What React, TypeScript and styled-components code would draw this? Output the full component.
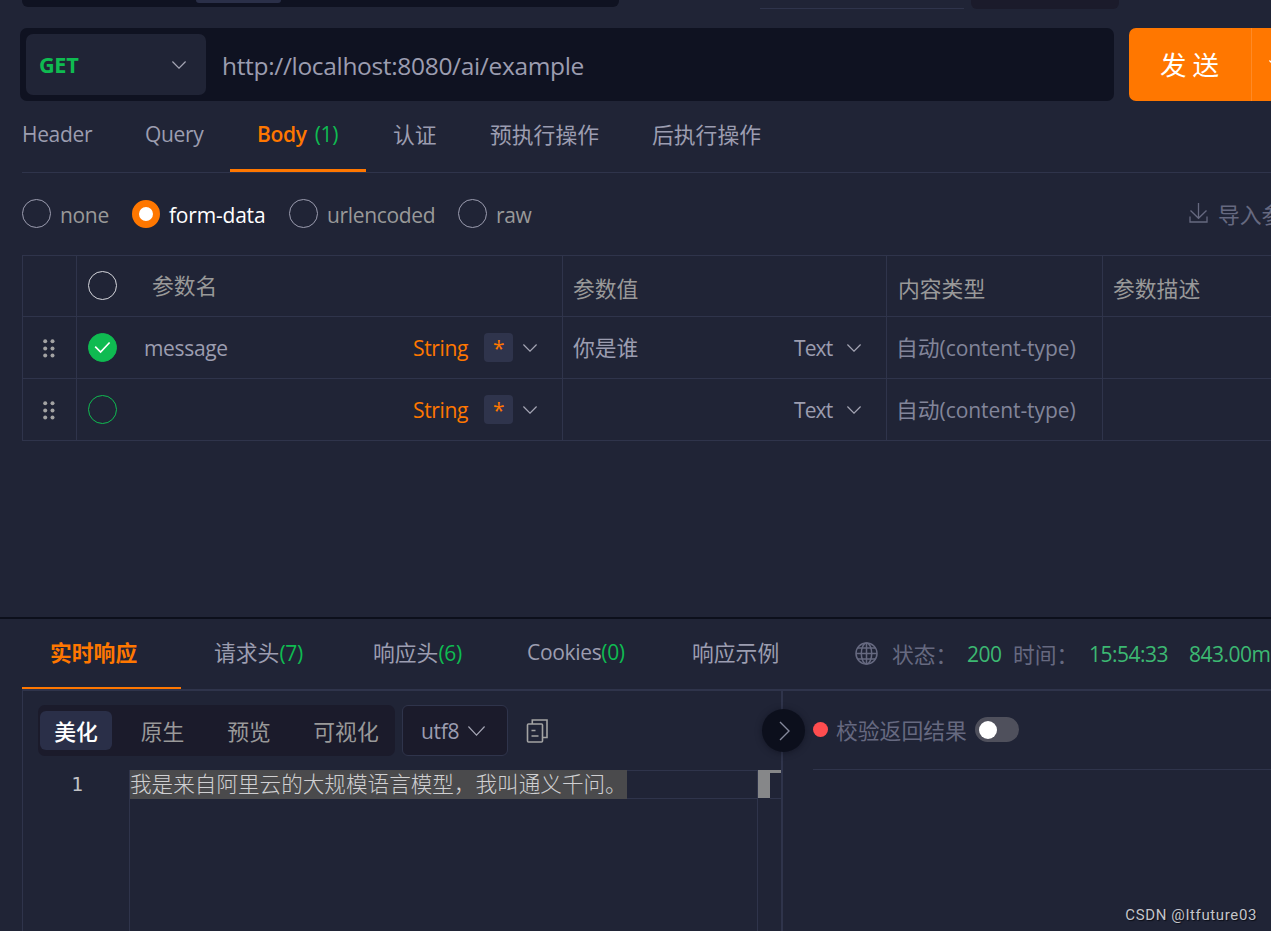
import React from "react";
import styled, { createGlobalStyle } from "styled-components";

const GlobalStyle = createGlobalStyle`
  * { box-sizing: border-box; }
  html, body { margin: 0; overflow: hidden; background: #202436; }
  body { font-family: "Open Sans", "Noto Sans CJK SC", sans-serif; }
`;

const line = "#2f344b";
const orange = "#ff7700";
const green = "#0fbb51";
const text = "#9c9db0";
const muted = "#666980";

const Page = styled.div`
  position: relative;
  width: 1271px;
  height: 931px;
  overflow: hidden;
  background: #202436;
  color: ${text};
  font-size: 21px;
  letter-spacing: -0.33px;
  line-height: 30px;
  display: flex;
  flex-direction: column;
  white-space: nowrap;
`;

const Cjk = styled.span<{ $size?: number }>`
  font-family: "Noto Sans CJK SC", sans-serif;
  font-size: ${(p) => p.$size ?? 21.8}px;
  letter-spacing: 0;
`;

const TopStrip = styled.div`
  display: flex;
  align-items: flex-start;
  height: 28px;
  flex: none;
  padding-left: 22px;
`;
const TopBar = styled.div`
  width: 597px;
  height: 7px;
  padding-left: 174px;
  background: #0f1221;
  border-radius: 0 0 6px 6px;
`;
const TopBarActive = styled.div`
  width: 85px;
  height: 3px;
  background: #2a2f48;
  border-radius: 0 0 4px 4px;
`;
const TopField = styled.div`
  width: 204px;
  height: 9px;
  margin-left: 141px;
  border-bottom: 1px solid ${line};
`;
const TopButton = styled.div`
  width: 148px;
  height: 9px;
  margin-left: 7px;
  background: #1b1b2b;
  border-radius: 0 0 6px 6px;
`;

const UrlRow = styled.div`
  display: flex;
  flex: none;
  height: 73px;
  padding-left: 20px;
`;
const UrlBox = styled.div`
  display: flex;
  align-items: center;
  flex: none;
  width: 1094px;
  padding: 0 6px;
  background: #0f1221;
  border-radius: 7px;
`;
const UrlText = styled.span`
  padding-top: 2px;
  font-size: 24.5px;
`;
const MethodSelect = styled.div`
  display: flex;
  align-items: center;
  justify-content: space-between;
  width: 180px;
  height: 61px;
  margin-right: 16px;
  padding: 0 20px 0 13px;
  border-radius: 7px;
  background: #202436;
  color: ${green};
  font-size: 21.7px;
  font-weight: 700;
`;
const SendButton = styled.div`
  display: flex;
  align-items: center;
  flex: none;
  width: 160px;
  margin-left: 15px;
  background: ${orange};
  border-radius: 7px;
  color: #fff;
`;
const SendLabel = styled.div`
  display: flex;
  align-items: center;
  width: 123px;
  height: 100%;
  padding: 0 0 1px 31px;
  border-right: 1px solid #ff8a26;
`;
const SendMore = styled.div`
  padding-left: 17px;
  display: flex;
`;

const Tabs = styled.div`
  display: flex;
  flex: none;
  height: 72px;
  margin-left: 22px;
  border-bottom: 1px solid ${line};
`;
const Tab = styled.div<{ $width: number; $first?: boolean; $active?: boolean }>`
  flex: none;
  width: ${(p) => p.$width}px;
  height: 71px;
  padding: 18px 0 0 ${(p) => (p.$first ? 0 : 27)}px;
  border-bottom: ${(p) => (p.$active ? `3px solid ${orange}` : "none")};
  color: ${(p) => (p.$active ? orange : text)};
  font-weight: ${(p) => (p.$active ? 600 : 400)};
`;
const Count = styled.span<{ $gap?: number }>`
  margin-left: ${(p) => p.$gap ?? 0}px;
  color: ${green};
  font-weight: 400;
`;

const BodyTypes = styled.div`
  display: flex;
  align-items: center;
  flex: none;
  height: 82px;
  padding-left: 22px;
`;
const RadioOption = styled.div<{ $width: number; $active?: boolean }>`
  display: flex;
  align-items: center;
  flex: none;
  gap: 9px;
  width: ${(p) => p.$width}px;
  margin-top: -1px;
  color: ${(p) => (p.$active ? "#fff" : "#999")};
  font-weight: ${(p) => (p.$active ? 500 : 400)};
  letter-spacing: ${(p) => (p.$active ? -0.2 : -0.33)}px;
  span { padding-top: 2px; }
`;
const Circle = styled.i<{ $color: string; $fill?: string }>`
  display: flex;
  align-items: center;
  justify-content: center;
  flex: none;
  width: 29px;
  height: 29px;
  border: 1px solid ${(p) => p.$color};
  border-radius: 50%;
  background: ${(p) => p.$fill ?? "transparent"};
`;
const RadioOn = styled.i`
  flex: none;
  width: 28px;
  height: 28px;
  border: 7px solid ${orange};
  border-radius: 50%;
  background: #fff;
`;
const ImportLink = styled.div`
  display: flex;
  align-items: center;
  gap: 10px;
  margin-left: 625px;
  color: ${muted};
  svg { margin-bottom: 3px; }
`;

const Table = styled.div`
  flex: none;
  width: 1300px;
  height: 186px;
  margin-left: 22px;
  border-left: 1px solid ${line};
  border-top: 1px solid ${line};
`;
const Row = styled.div<{ $head?: boolean }>`
  display: grid;
  grid-template-columns: 54px 486px 324px 216px 1fr;
  height: ${(p) => (p.$head ? 61 : 62)}px;
  border-bottom: 1px solid ${line};
  color: ${(p) => (p.$head ? "#999" : text)};
`;
const Cell = styled.div<{ $pad?: number; $drop?: number; $lift?: number }>`
  display: flex;
  align-items: center;
  border-right: 1px solid ${line};
  padding-left: ${(p) => p.$pad ?? 0}px;
  padding-top: ${(p) => p.$drop ?? 0}px;
  padding-bottom: ${(p) => p.$lift ?? 0}px;
`;
const Name = styled.span<{ $gap: number }>`
  flex: 1;
  padding-left: ${(p) => p.$gap}px;
`;
const TypeName = styled.span`
  width: 71px;
  color: ${orange};
`;
const Required = styled.span`
  width: 29px;
  height: 29px;
  margin-right: 10px;
  border-radius: 4px;
  background: #2f344c;
  color: ${orange};
  text-align: center;
  line-height: 31px;
`;
const ChevronSlot = styled.span<{ $right: number }>`
  display: flex;
  margin-right: ${(p) => p.$right}px;
`;
const Value = styled.span`
  flex: 1;
`;
const ValueType = styled.span`
  width: 53px;
  letter-spacing: -0.9px;
`;
const ContentType = styled.span`
  color: #82859a;
  letter-spacing: -0.08px;
`;

const Response = styled.div`
  display: flex;
  flex-direction: column;
  flex: 1;
  margin-top: 176px;
  border-top: 2px solid #0c0f1b;
`;
const ResponseTabs = styled.div`
  display: flex;
  flex: none;
  height: 72px;
  margin-left: 22px;
  border-bottom: 2px solid ${line};
`;
const ResponseTab = styled.div<{ $width: number; $pad: number; $active?: boolean }>`
  flex: none;
  width: ${(p) => p.$width}px;
  height: 70px;
  padding: 18px 0 0 ${(p) => p.$pad}px;
  border-bottom: ${(p) => (p.$active ? `2px solid ${orange}` : "none")};
  color: ${(p) => (p.$active ? orange : text)};
  font-weight: ${(p) => (p.$active ? 700 : 400)};
`;
const Status = styled.div`
  display: flex;
  align-items: flex-start;
  padding-top: 20px;
  color: ${muted};
  svg { margin: 3px 14px 0 1px; }
`;
const StatusLabel = styled.span<{ $width: number }>`
  flex: none;
  width: ${(p) => p.$width}px;
`;
const StatusValue = styled.span<{ $width: number }>`
  flex: none;
  width: ${(p) => p.$width}px;
  color: #3cb872;
  letter-spacing: -0.5px;
`;

const Panels = styled.div`
  display: flex;
  flex: 1;
  padding-left: 22px;
`;
const ResultPanel = styled.div`
  position: relative;
  display: flex;
  flex-direction: column;
  flex: none;
  width: 761px;
  border-left: 1px solid ${line};
  border-right: 2px solid ${line};
`;
const Toolbar = styled.div`
  display: flex;
  align-items: center;
  flex: none;
  height: 79px;
  padding-left: 15px;
`;
const Segments = styled.div`
  display: flex;
  align-items: center;
  flex: none;
  width: 357px;
  height: 51px;
  margin-right: 7px;
  padding-left: 2px;
  border-radius: 7px;
  background: #1b1b2b;
`;
const Segment = styled.div<{ $width: number; $active?: boolean }>`
  display: flex;
  align-items: center;
  justify-content: center;
  flex: none;
  width: ${(p) => p.$width}px;
  height: 39px;
  border-radius: 6px;
  background: ${(p) => (p.$active ? "#2a2f48" : "transparent")};
  color: ${(p) => (p.$active ? "#fff" : "#999")};
  font-weight: ${(p) => (p.$active ? 500 : 400)};
`;
const Encoding = styled.div`
  display: flex;
  align-items: center;
  gap: 9px;
  flex: none;
  width: 106px;
  height: 51px;
  margin-right: 18px;
  padding-left: 18px;
  border: 1px solid ${line};
  border-radius: 6px;
  background: #1b1b2b;
`;
const Editor = styled.div`
  display: flex;
  flex: 1;
`;
const Gutter = styled.div`
  width: 107px;
  padding-right: 46px;
  border-right: 1px solid ${line};
  color: #c0c1c6;
  font-family: "DejaVu Sans Mono", monospace;
  font-size: 19.5px;
  letter-spacing: 0;
  line-height: 30px;
  text-align: right;
`;
const CodeArea = styled.div`
  flex: 1;
`;
const CodeLine = styled.div`
  height: 29px;
  border-top: 1px solid ${line};
  border-bottom: 1px solid ${line};
`;
const Selected = styled.div`
  width: 497px;
  height: 29px;
  margin-top: -1px;
  background: #4a4a4c;
  color: #d0d0d2;
  font-family: "Noto Sans CJK SC", sans-serif;
  font-size: 21.6px;
  font-weight: 300;
  letter-spacing: 0;
  line-height: 25px;
`;
const Ruler = styled.div`
  display: flex;
  align-items: flex-start;
  width: 24px;
  border-left: 1px solid ${line};
`;
const Thumb = styled.div`
  width: 12px;
  height: 28px;
  background: #868789;
`;
const RulerMark = styled.div`
  flex: 1;
  height: 29px;
  border-top: 3px solid #868789;
  border-bottom: 1px solid ${line};
`;
const CollapseButton = styled.div`
  position: absolute;
  right: -24px;
  top: 18px;
  display: flex;
  align-items: center;
  justify-content: center;
  width: 43px;
  height: 43px;
  padding-left: 1px;
  border-radius: 50%;
  background: #0c0f1c;
  box-shadow: 0 1px 6px rgba(10, 12, 24, 0.5);
`;
const CheckPanel = styled.div`
  flex: 1;
  padding-left: 30px;
`;
const CheckHeader = styled.div`
  display: flex;
  align-items: center;
  height: 79px;
  border-bottom: 1px solid ${line};
  color: ${muted};
`;
const Dot = styled.i`
  width: 15px;
  height: 15px;
  margin: 0 8px 1px 0;
  border-radius: 50%;
  background: #ff4d4f;
`;
const Toggle = styled.i`
  width: 44px;
  height: 25px;
  margin: 0 0 1px 8px;
  padding: 4px 4px;
  border-radius: 13px;
  background: #4f505c;
`;
const Knob = styled.b`
  display: block;
  width: 18px;
  height: 18px;
  border-radius: 50%;
  background: #fff;
`;
const Watermark = styled.div`
  position: absolute;
  right: 14px;
  bottom: 6px;
  color: #c4c5ca;
  font-family: Roboto, sans-serif;
  font-size: 15px;
  line-height: 20px;
  letter-spacing: 0.62px;
  text-shadow: 1px 1px 1px #0b0d16;
`;

const Chevron = ({ w = 14, h = 8, color = "#a5a6b5" }: { w?: number; h?: number; color?: string }) => (
  <svg width={w} height={h} viewBox={`0 0 ${w} ${h}`} fill="none" stroke={color} strokeWidth="1.2">
    <path d={`M.4 .5L${w / 2} ${h - 0.9}L${w - 0.4} .5`} />
  </svg>
);

const DragDots = () => (
  <svg width="12" height="19" viewBox="0 0 12 19" fill="#a3a3a3">
    {[2.2, 9.4, 16.4].map((y) => (
      <React.Fragment key={y}>
        <circle cx="2.2" cy={y} r="2" />
        <circle cx="9.5" cy={y} r="2" />
      </React.Fragment>
    ))}
  </svg>
);

const ParamRow = ({ name, value, checked }: { name?: string; value?: string; checked?: boolean }) => (
  <Row>
    <Cell $pad={20} $drop={2}><DragDots /></Cell>
    <Cell $pad={11}>
      <Circle $color={green} $fill={checked ? green : undefined}>
        {checked && (
          <svg width="17" height="13" viewBox="0 0 17 13" fill="none" stroke="#fff" strokeWidth="1.7">
            <path d="M1.2 5.6L6.6 11L15.6 1.5" />
          </svg>
        )}
      </Circle>
      <Name $gap={27}>{name}</Name>
      <TypeName>String</TypeName>
      <Required>*</Required>
      <ChevronSlot $right={25}><Chevron /></ChevronSlot>
    </Cell>
    <Cell $pad={10}>
      <Value><Cjk>{value}</Cjk></Value>
      <ValueType>Text</ValueType>
      <ChevronSlot $right={25}><Chevron /></ChevronSlot>
    </Cell>
    <Cell $pad={9}>
      <ContentType><Cjk>自动</Cjk>(content-type)</ContentType>
    </Cell>
    <Cell />
  </Row>
);

export default function App() {
  return (
    <Page>
      <GlobalStyle />
      <TopStrip>
        <TopBar><TopBarActive /></TopBar>
        <TopField />
        <TopButton />
      </TopStrip>

      <UrlRow>
        <UrlBox>
          <MethodSelect>GET<Chevron /></MethodSelect>
          <UrlText>http://localhost:8080/ai/example</UrlText>
        </UrlBox>
        <SendButton>
          <SendLabel><Cjk $size={26.5}>发 送</Cjk></SendLabel>
          <SendMore><Chevron w={16} h={9} color="#fff" /></SendMore>
        </SendButton>
      </UrlRow>

      <Tabs>
        <Tab $width={96} $first>Header</Tab>
        <Tab $width={112}>Query</Tab>
        <Tab $width={136} $active>Body<Count $gap={8}>(1)</Count></Tab>
        <Tab $width={97}><Cjk>认证</Cjk></Tab>
        <Tab $width={162}><Cjk>预执行操作</Cjk></Tab>
        <Tab $width={162}><Cjk>后执行操作</Cjk></Tab>
      </Tabs>

      <BodyTypes>
        <RadioOption $width={110}><Circle $color="#9c9db0" /><span>none</span></RadioOption>
        <RadioOption $width={157} $active><RadioOn /><span>form-data</span></RadioOption>
        <RadioOption $width={169}><Circle $color="#9c9db0" /><span>urlencoded</span></RadioOption>
        <RadioOption $width={106}><Circle $color="#9c9db0" /><span>raw</span></RadioOption>
        <ImportLink>
          <svg width="19" height="20" viewBox="0 0 19 20" fill="none" stroke="currentColor" strokeWidth="1.3">
            <path d="M9.5 0V15M1.5 7.5L9.5 15.3L17.5 7.5M1 13.5V19H18V13.5" />
          </svg>
          <Cjk>导入参数</Cjk>
        </ImportLink>
      </BodyTypes>

      <Table>
        <Row $head>
          <Cell />
          <Cell $pad={11} $lift={1}>
            <Circle $color="#d5d6dc" />
            <Name $gap={35}><Cjk>参数名</Cjk></Name>
          </Cell>
          <Cell $pad={10} $drop={3}><Cjk>参数值</Cjk></Cell>
          <Cell $pad={11} $drop={3}><Cjk>内容类型</Cjk></Cell>
          <Cell $pad={10} $drop={3}><Cjk>参数描述</Cjk></Cell>
        </Row>
        <ParamRow name="message" value="你是谁" checked />
        <ParamRow />
      </Table>

      <Response>
        <ResponseTabs>
          <ResponseTab $width={159} $pad={28} $active><Cjk>实时响应</Cjk></ResponseTab>
          <ResponseTab $width={159} $pad={33}><Cjk>请求头</Cjk><Count>(7)</Count></ResponseTab>
          <ResponseTab $width={153} $pad={33}><Cjk>响应头</Cjk><Count>(6)</Count></ResponseTab>
          <ResponseTab $width={165} $pad={34}>Cookies<Count>(0)</Count></ResponseTab>
          <ResponseTab $width={196} $pad={34}><Cjk>响应示例</Cjk></ResponseTab>
          <Status>
            <svg width="23" height="23" viewBox="0 0 23 23" fill="none" stroke="currentColor" strokeWidth="1.5">
              <circle cx="11.5" cy="11.5" r="10.5" />
              <ellipse cx="11.5" cy="11.5" rx="5.2" ry="10.5" />
              <path d="M11.5 1V22M1 11.5H22M2.8 6H20.2M2.8 17H20.2" />
            </svg>
            <StatusLabel $width={75}><Cjk>状态：</Cjk></StatusLabel>
            <StatusValue $width={46}>200</StatusValue>
            <StatusLabel $width={76}><Cjk>时间：</Cjk></StatusLabel>
            <StatusValue $width={100}>15:54:33</StatusValue>
            <StatusValue $width={100}>843.00ms</StatusValue>
          </Status>
        </ResponseTabs>

        <Panels>
          <ResultPanel>
            <Toolbar>
              <Segments>
                <Segment $width={72} $active><Cjk>美化</Cjk></Segment>
                <Segment $width={101}><Cjk>原生</Cjk></Segment>
                <Segment $width={72}><Cjk>预览</Cjk></Segment>
                <Segment $width={122}><Cjk>可视化</Cjk></Segment>
              </Segments>
              <Encoding>utf8<Chevron w={17} h={10} /></Encoding>
              <svg width="22" height="24" viewBox="0 0 22 24" fill="none" stroke="#a3a3a3" strokeWidth="1.6">
                <rect x="1.5" y="5" width="15" height="18" rx="1" />
                <path d="M6.3 5V1H21V18.5H16.5M5.5 11.5H9.5M5.5 17H12.5" />
              </svg>
            </Toolbar>
            <Editor>
              <Gutter>1</Gutter>
              <CodeArea>
                <CodeLine>
                  <Selected>我是来自阿里云的大规模语言模型，我叫通义千问。</Selected>
                </CodeLine>
              </CodeArea>
              <Ruler><Thumb /><RulerMark /></Ruler>
            </Editor>
            <CollapseButton>
              <svg width="11" height="20" viewBox="0 0 11 20" fill="none" stroke="#85889b" strokeWidth="1.4">
                <path d="M1 1L10 10L1 19" />
              </svg>
            </CollapseButton>
          </ResultPanel>
          <CheckPanel>
            <CheckHeader>
              <Dot />
              <Cjk>校验返回结果</Cjk>
              <Toggle><Knob /></Toggle>
            </CheckHeader>
          </CheckPanel>
        </Panels>
      </Response>
      <Watermark>CSDN @Itfuture03</Watermark>
    </Page>
  );
}
